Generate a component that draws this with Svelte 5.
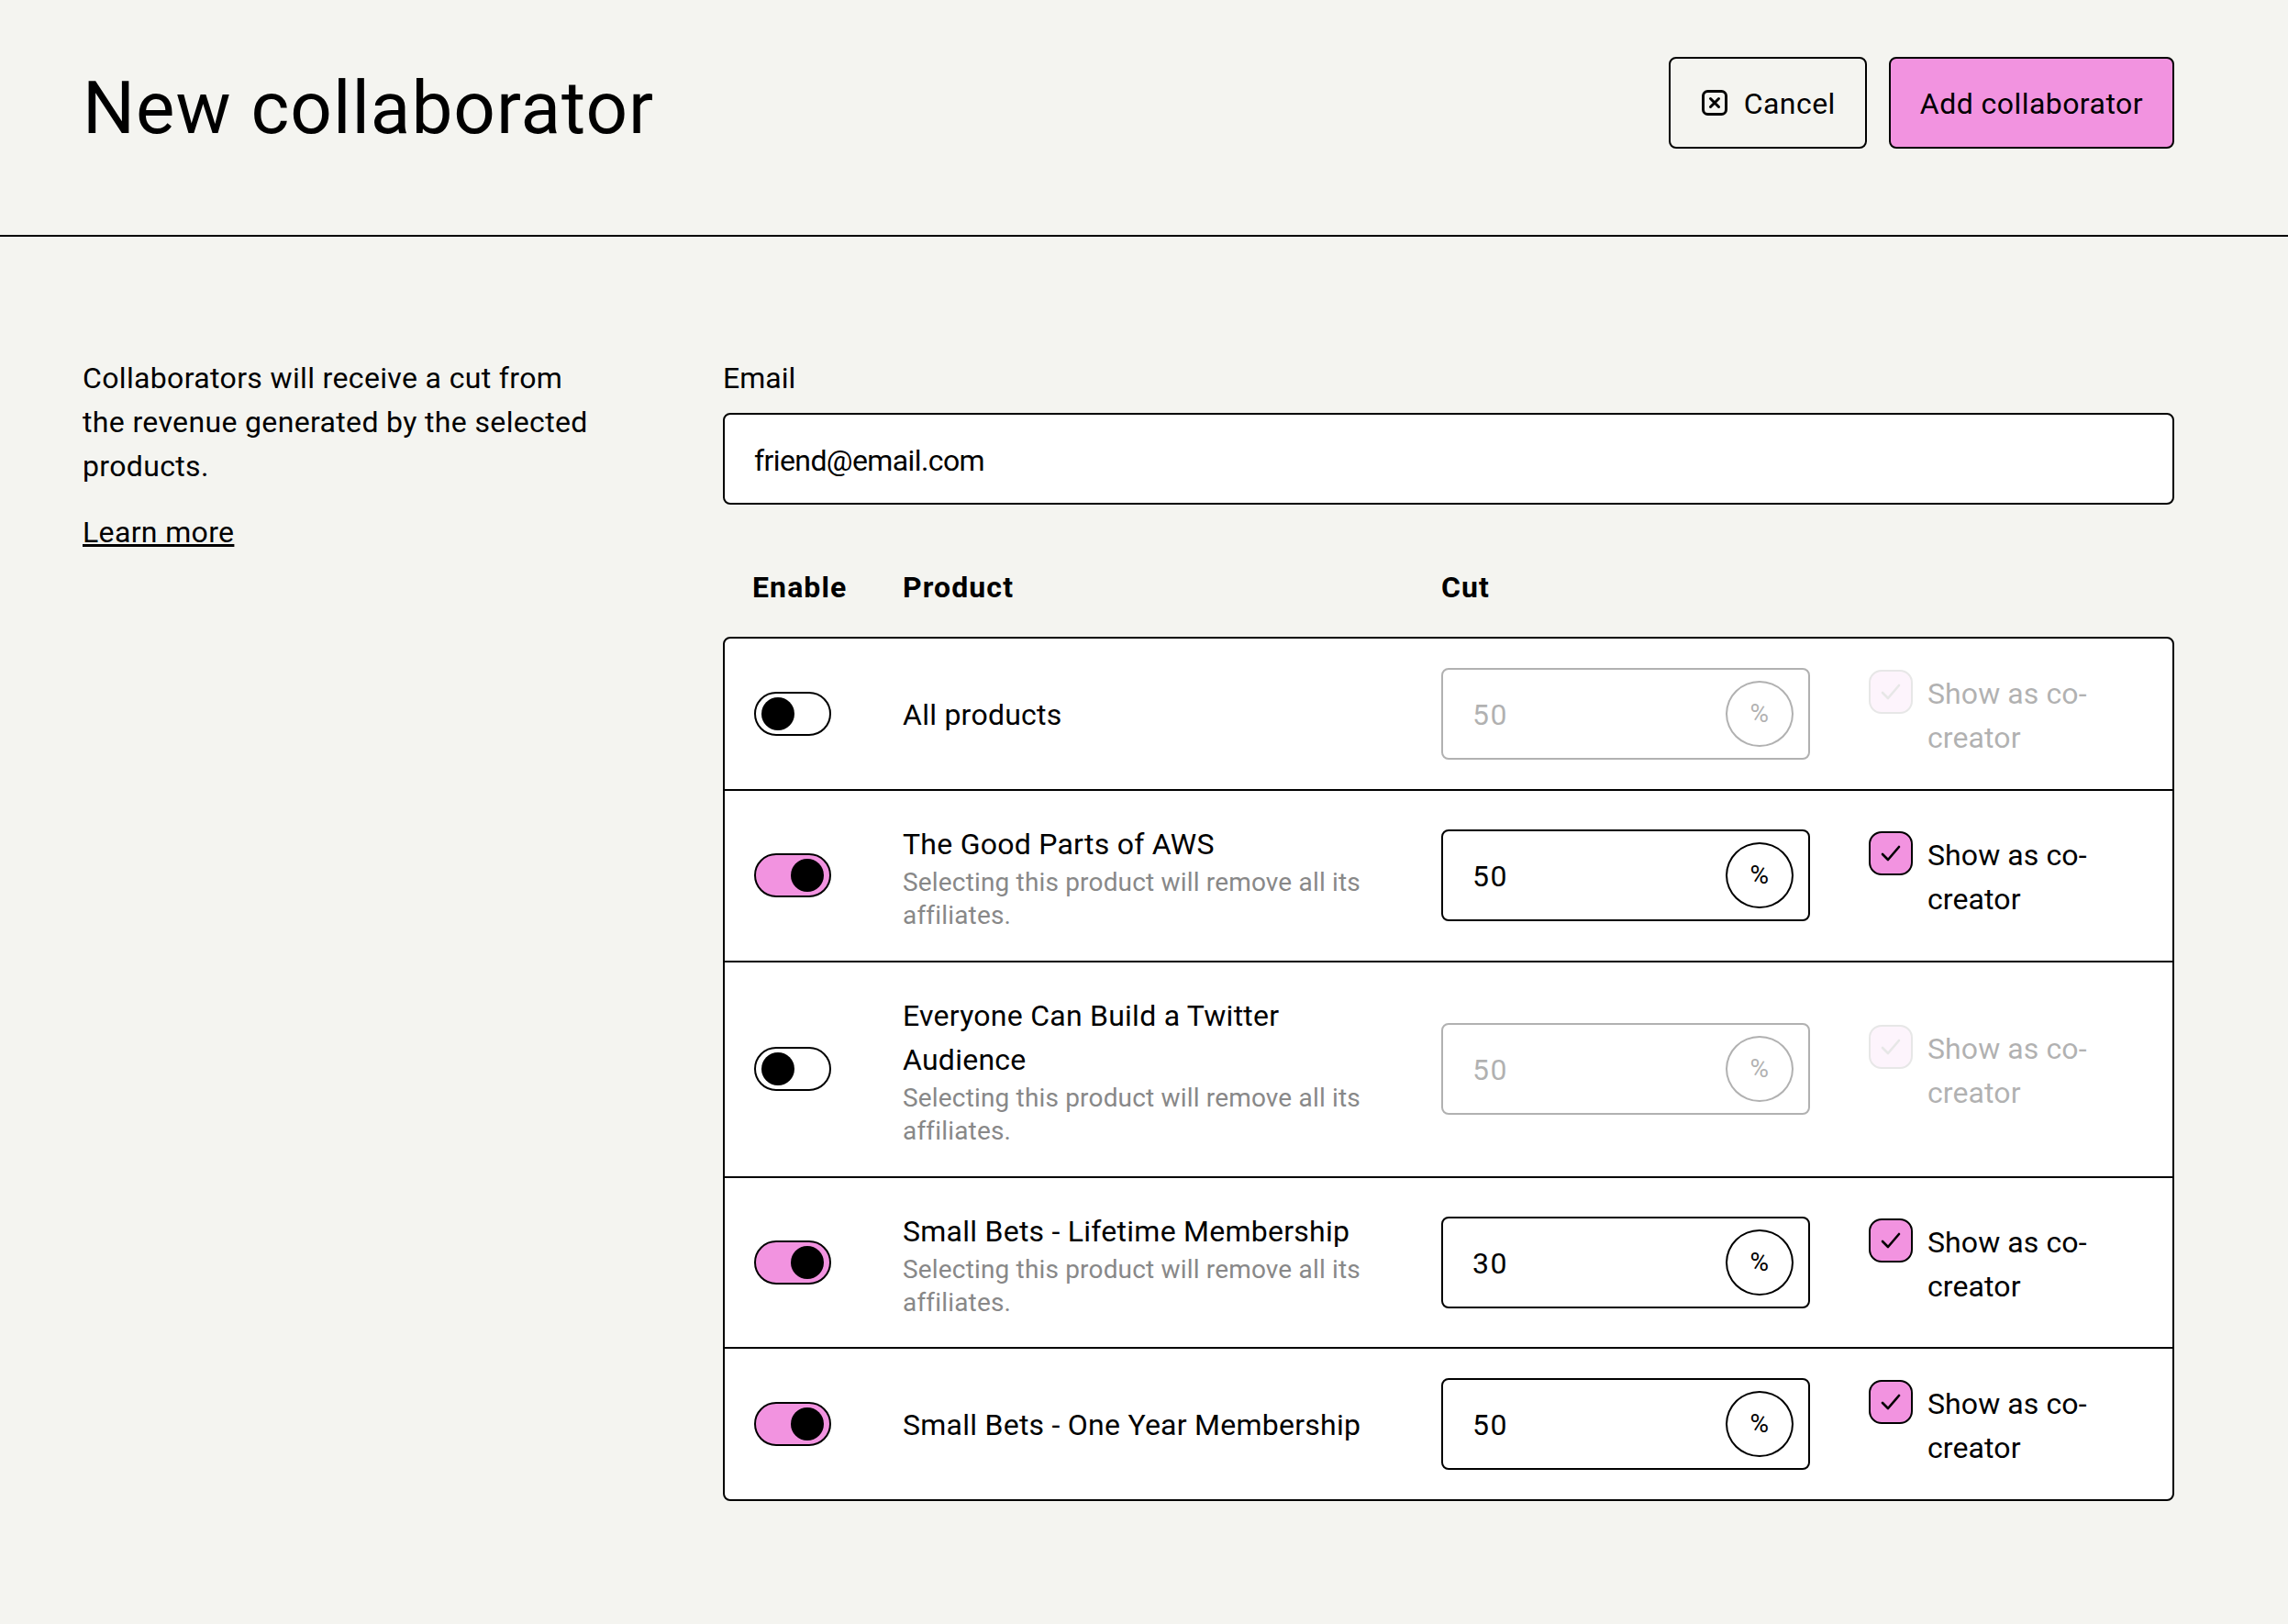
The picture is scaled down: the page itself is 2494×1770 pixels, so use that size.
<script>
  const rows = [
    { name: 'All products', on: false, cut: 50, note: false },
    { name: 'The Good Parts of AWS', on: true, cut: 50, note: true },
    { name: 'Everyone Can Build a Twitter Audience', on: false, cut: 50, note: true },
    { name: 'Small Bets - Lifetime Membership', on: true, cut: 30, note: true },
    { name: 'Small Bets - One Year Membership', on: true, cut: 50, note: false }
  ];
</script>

<div class="page">
  <header class="top">
    <h1>New collaborator</h1>
    <div class="actions">
      <button class="btn">
        <svg width="32" height="32" viewBox="0 0 32 32" fill="none" stroke="#000" stroke-width="3" aria-hidden="true">
          <rect x="3.5" y="3.5" width="25" height="25" rx="5" />
          <path d="M11.5 11.5l9 9M20.5 11.5l-9 9" stroke-linecap="round" />
        </svg>
        <span>Cancel</span>
      </button>
      <button class="btn primary"><span>Add collaborator</span></button>
    </div>
  </header>

  <main class="content">
    <aside class="intro">
      <p>Collaborators will receive a cut from the revenue generated by the selected products.</p>
      <a href="#learn">Learn more</a>
    </aside>
    <section class="form">
      <label class="field-label" for="email">Email</label>
      <input id="email" class="email" type="text" value="friend@email.com" />

      <div class="grid head">
        <div>Enable</div>
        <div>Product</div>
        <div>Cut</div>
      </div>

      <div class="table">
        {#each rows as row}
          <div class="grid row">
            <span class="toggle" class:on={row.on}><span class="knob"></span></span>
            <div class="product">
              <div class="name">{row.name}</div>
              {#if row.note}
                <div class="note">Selecting this product will remove all its affiliates.</div>
              {/if}
            </div>
            <div class="cut" class:off={!row.on}>
              <span class="value">{row.cut}</span>
              <span class="pct">%</span>
            </div>
            <div class="share" class:off={!row.on}>
              <span class="check">
                <svg width="24" height="22" viewBox="0 0 24 22" fill="none" stroke="#000" stroke-width="2.6" stroke-linecap="round" stroke-linejoin="round" aria-hidden="true">
                  <path d="M3 12l6 6L21 4" />
                </svg>
              </span>
              <span class="share-text">Show as co-creator</span>
            </div>
          </div>
        {/each}
      </div>
    </section>
  </main>
</div>

<style>
  :global(body) {
    margin: 0;
    background: #f4f4f0;
  }
  .page {
    min-height: 1770px;
    background: #f4f4f0;
    color: #000;
    font-family: Roboto, "Liberation Sans", sans-serif;
    font-size: 32px;
    line-height: 48px;
    letter-spacing: 0.35px;
  }
  .top {
    display: flex;
    justify-content: space-between;
    align-items: flex-start;
    padding: 62px 124px 82px 90px;
    border-bottom: 2px solid #000;
  }
  h1 {
    margin: 0;
    font-size: 80px;
    line-height: 112px;
    font-weight: 400;
    letter-spacing: 1px;
  }
  .actions {
    display: flex;
    gap: 24px;
  }
  .btn {
    display: flex;
    align-items: center;
    gap: 16px;
    height: 100px;
    padding: 0 32px;
    border: 2px solid #000;
    border-radius: 8px;
    background: transparent;
    color: #000;
    font: inherit;
    letter-spacing: 0.45px;
  }
  .btn span {
    padding-top: 2px;
  }
  .primary {
    background: #f293e0;
  }
  .content {
    display: grid;
    grid-template-columns: 634px 1582px;
    gap: 64px;
    padding: 130px 90px 0;
  }
  .intro p {
    max-width: 562px;
    margin: 0 0 24px;
  }
  .intro a {
    color: #000;
  }
  .field-label {
    display: block;
    margin-bottom: 14px;
    letter-spacing: 0;
  }
  .email {
    display: block;
    box-sizing: border-box;
    width: 100%;
    height: 100px;
    padding: 3px 32px 0;
    border: 2px solid #000;
    border-radius: 8px;
    background: #fff;
    color: #000;
    font: inherit;
    letter-spacing: -0.6px;
  }
  .grid {
    display: grid;
    grid-template-columns: 162px 587px 466px 1fr;
    align-items: center;
    padding: 0 32px;
  }
  .head {
    grid-template-columns: 164px 587px 466px 1fr;
    margin-top: 66px;
    margin-bottom: 30px;
    font-weight: 700;
    letter-spacing: 1.1px;
  }
  .table {
    border: 2px solid #000;
    border-radius: 8px;
    background: #fff;
  }
  .row {
    padding-top: 32px;
    padding-bottom: 32px;
  }
  .row + .row {
    border-top: 2px solid #000;
  }
  .toggle {
    box-sizing: border-box;
    display: flex;
    width: 84px;
    height: 48px;
    padding: 4px 6px;
    border: 2px solid #000;
    border-radius: 24px;
    background: #fff;
  }
  .toggle.on {
    justify-content: flex-end;
    background: #f293e0;
  }
  .knob {
    width: 36px;
    height: 36px;
    border-radius: 50%;
    background: #000;
  }
  .product {
    padding-right: 60px;
  }
  .name {
    padding-top: 2px;
    letter-spacing: 0.25px;
  }
  .note {
    margin-bottom: -2px;
    color: #888;
    font-size: 28px;
    line-height: 36.4px;
    letter-spacing: 0.17px;
  }
  .cut {
    box-sizing: border-box;
    display: flex;
    align-items: center;
    justify-content: space-between;
    width: 402px;
    height: 100px;
    padding: 0 16px 0 32px;
    border: 2px solid #000;
    border-radius: 8px;
  }
  .cut.off {
    opacity: 0.3;
  }
  .value {
    padding-top: 2px;
    letter-spacing: 1.5px;
  }
  .pct {
    box-sizing: border-box;
    display: flex;
    align-items: center;
    justify-content: center;
    width: 74px;
    height: 72px;
    border: 2px solid #000;
    border-radius: 50%;
    font-size: 28px;
  }
  .share {
    display: flex;
    gap: 16px;
    letter-spacing: 0.1px;
  }
  .share-text {
    flex: 1;
    padding-top: 3px;
  }
  .check {
    box-sizing: border-box;
    flex: none;
    display: flex;
    align-items: center;
    justify-content: center;
    width: 48px;
    height: 48px;
    margin-top: 1px;
    border: 2px solid #000;
    border-radius: 14px;
    background: #f293e0;
  }
  .share.off .share-text {
    opacity: 0.3;
  }
  .share.off .check {
    opacity: 0.09;
  }
</style>
